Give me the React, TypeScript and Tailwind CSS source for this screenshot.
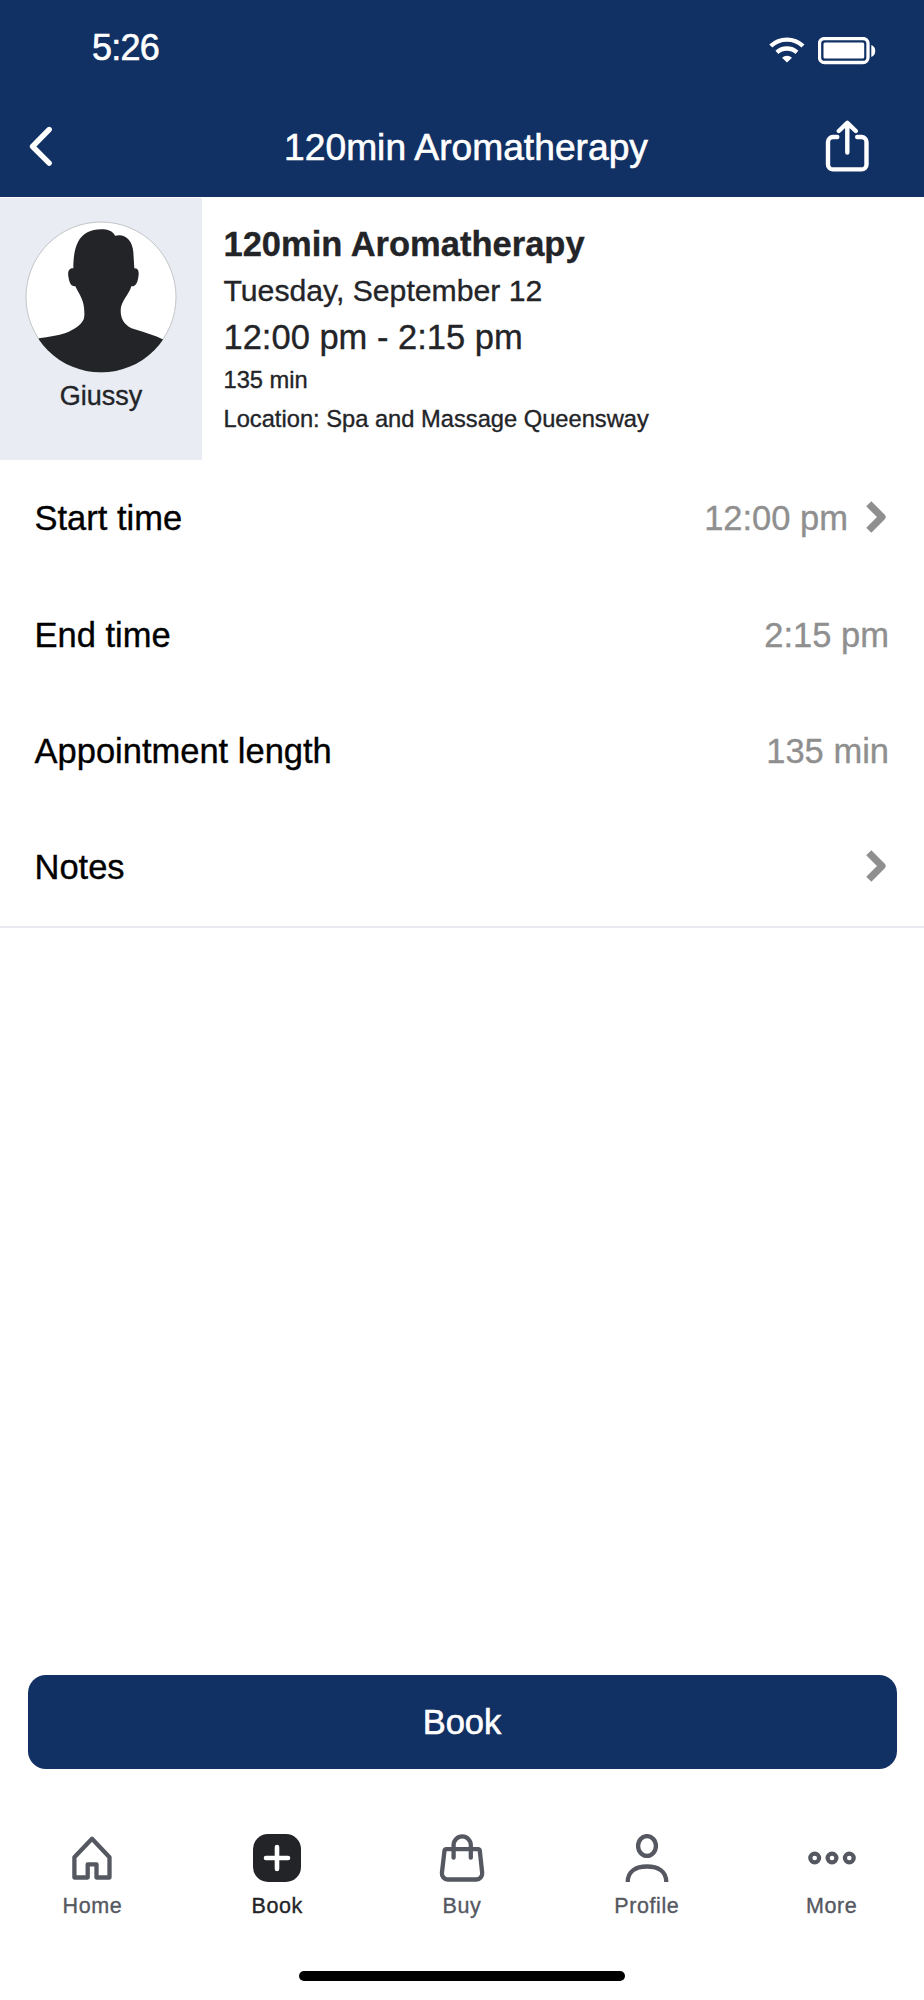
import type { ReactNode } from "react";

function BackIcon() {
  return (
    <svg className="h-12 w-[30px]" viewBox="0 0 30 48" fill="none" stroke="white" strokeWidth="5.4" strokeLinecap="round" strokeLinejoin="round">
      <path d="M21.2 7.5 4.5 24.5 21.2 41.2" />
    </svg>
  );
}

function ShareIcon() {
  return (
    <svg className="h-[52px] w-[44px]" viewBox="0 0 44 52" fill="none" stroke="white" strokeWidth="4.4" strokeLinecap="round" strokeLinejoin="round">
      <path d="M12.3 17H8a5 5 0 0 0-5 5v22.4a5 5 0 0 0 5 5h28.5a5 5 0 0 0 5-5V22a5 5 0 0 0-5-5h-4.3" />
      <path d="M22.3 32.5V3M13.8 11 22.3 2.8l8.5 8.2" />
    </svg>
  );
}

function WifiIcon() {
  return (
    <svg className="h-[27px] w-[36px]" viewBox="0 0 36 27" fill="none" stroke="white" strokeWidth="4.4">
      <path d="M1.8 9A23.5 23.5 0 0 1 34 9" />
      <path d="M7.9 15.4A14.8 14.8 0 0 1 27.9 15.4" />
      <path d="M18 25.5 13 20.7A7.5 7.5 0 0 1 23 20.7Z" fill="white" stroke="none" />
    </svg>
  );
}

function BatteryIcon() {
  return (
    <svg className="h-7 w-[58px]" viewBox="0 0 58 28" fill="white">
      <rect x="1.5" y="1.5" width="48.5" height="24" rx="5" fill="none" stroke="white" strokeWidth="3.3" />
      <rect x="5.5" y="5.5" width="40.7" height="16" rx="1.5" />
      <path d="M53.3 8c5.3 1.5 5.3 10.5 0 12Z" />
    </svg>
  );
}

function Avatar() {
  return (
    <svg className="h-[152px] w-[152px]" viewBox="74 94 456 456">
      <defs>
        <clipPath id="avatar-clip">
          <circle cx="302" cy="322" r="226" />
        </clipPath>
      </defs>
      <circle cx="302" cy="322" r="225" fill="white" stroke="#b9babd" strokeWidth="2.5" />
      <path
        clipPath="url(#avatar-clip)"
        fill="#232428"
        d="M302 119C322 119 338 124 344 138C375 130 397 153 399 188L402 236C414 236 417 245 414 262C411 282 405 291 393 290C386 316 361 334 361 363C361 393 377 410 403 419C433 429 462 436 490 450L530 560H74L116 446C145 441 174 438 196 430C221 420 251 403 252 379C254 333 239 319 225 290C211 291 207 279 204 260C202 244 206 236 219 236C219 206 222 178 233 157C247 130 272 119 302 119Z"
      />
    </svg>
  );
}

function ChevronIcon() {
  return (
    <svg className="-mt-[3px] h-[32px] w-[21px]" viewBox="0 0 21 32" fill="none" stroke="#8f8f8f" strokeWidth="7.2" strokeLinejoin="round">
      <path d="M2.8 2.8 16 16 2.8 29.2" />
    </svg>
  );
}

function HomeIcon() {
  return (
    <svg className="size-12" viewBox="0 0 48 48" fill="none" stroke="#555861" strokeWidth="4.3" strokeLinejoin="round">
      <path d="M24 4.8 41.5 23.3V43.5H28.5V30.3H19.7V43.5H6.4V23.3Z" />
    </svg>
  );
}

function BookIcon() {
  return (
    <svg className="size-12" viewBox="0 0 48 48">
      <rect width="48" height="48" rx="15" fill="#232428" />
      <path d="M24 13v22M13 24h22" stroke="white" strokeWidth="4.6" strokeLinecap="round" />
    </svg>
  );
}

function BagIcon() {
  return (
    <svg className="size-12" viewBox="0 0 48 48" fill="none" stroke="#555861" strokeWidth="4.3" strokeLinejoin="round" strokeLinecap="round">
      <path d="M8.3 15.2H40a1.8 1.8 0 0 1 1.8 1.6L44.2 39a6 6 0 0 1-5.8 6.5H9.7a6 6 0 0 1-5.8-6.5L6.5 16.8A1.8 1.8 0 0 1 8.3 15.2Z" />
      <path d="M15.6 23.7V11a8.6 8.6 0 0 1 17.2 0v12.7" />
    </svg>
  );
}

function ProfileIcon() {
  return (
    <svg className="size-12" viewBox="0 0 48 48" fill="none" stroke="#555861" strokeWidth="4.3">
      <ellipse cx="24" cy="12" rx="8.9" ry="9.9" />
      <path d="M4.7 48C4.7 37 13 32.5 24 32.5S43.3 37 43.3 48" />
    </svg>
  );
}

function MoreIcon() {
  return (
    <svg className="size-12" viewBox="0 0 48 48" fill="none" stroke="#555861" strokeWidth="4.2">
      <circle cx="6.7" cy="24" r="4.4" />
      <circle cx="24" cy="24" r="4.4" />
      <circle cx="41.3" cy="24" r="4.4" />
    </svg>
  );
}

function Row({ label, value, chevron }: { label: string; value?: string; chevron?: boolean }) {
  return (
    <div className="flex flex-1 items-center pr-[35px] pl-[34.5px] text-[34.5px] leading-10">
      <span className="flex-1 text-black">{label}</span>
      <span className="text-[#8f8f8f]">{value}</span>
      {chevron && (
        <span className="mr-[2px] ml-[18px] flex">
          <ChevronIcon />
        </span>
      )}
    </div>
  );
}

function Tab({ label, active, children }: { label: string; active?: boolean; children: ReactNode }) {
  return (
    <button className={`flex flex-1 flex-col items-center ${active ? "text-[#232428]" : "text-[#555861]"}`}>
      {children}
      <span className="mt-[11px] text-[21.5px] leading-[26px] tracking-[0.6px]">{label}</span>
    </button>
  );
}

export default function App() {
  return (
    <div className="flex h-[2000px] w-[924px] flex-col overflow-hidden bg-white font-['Liberation_Sans',Arial,sans-serif] text-[#232428] [-webkit-text-stroke:0.35px]">
      <header className="h-[196.5px] shrink-0 bg-[#113063] text-white [-webkit-text-stroke:0.6px]">
        <div className="flex h-[98px] items-start pt-[27px] pr-[48.5px] pl-[92px]">
          <span className="mt-px flex-1 text-[36px] leading-10 tracking-[-0.8px]">5:26</span>
          <span className="mt-[10px] mr-[13px]">
            <WifiIcon />
          </span>
          <span className="mt-[10px]">
            <BatteryIcon />
          </span>
        </div>
        <div className="flex h-[96px] items-center pr-[55px] pl-[28px]">
          <BackIcon />
          <h1 className="mt-px flex-1 pl-[49px] text-center text-[37.2px] leading-[44px]">120min Aromatherapy</h1>
          <ShareIcon />
        </div>
      </header>

      <section className="flex h-[263.5px] shrink-0">
        <div className="mt-[1.5px] flex w-[202px] flex-col items-center bg-[#e9ecf2] pt-[23px]">
          <Avatar />
          <span className="mt-[7px] text-[27px] leading-8">Giussy</span>
        </div>
        <div className="flex flex-col pt-[24px] pl-[21.5px]">
          <h2 className="text-[34.5px] leading-[46px] font-bold">120min Aromatherapy</h2>
          <p className="text-[30.2px] leading-[48px]">Tuesday, September 12</p>
          <p className="text-[34.5px] leading-[44px]">12:00 pm - 2:15 pm</p>
          <p className="mt-px text-[23.7px] leading-[40px]">135 min</p>
          <p className="text-[23.7px] leading-[38px]">Location: Spa and Massage Queensway</p>
        </div>
      </section>

      <section className="flex h-[467.5px] shrink-0 flex-col border-b-2 border-[#e9e9f1]">
        <Row label="Start time" value="12:00 pm" chevron />
        <Row label="End time" value="2:15 pm" />
        <Row label="Appointment length" value="135 min" />
        <Row label="Notes" chevron />
      </section>

      <div className="flex-1" />

      <div className="px-[27.5px]">
        <button className="flex h-[94.5px] w-full items-center justify-center rounded-[18px] bg-[#113063] pt-[2px] text-[34.5px] text-white [-webkit-text-stroke:0.6px]">Book</button>
      </div>

      <nav className="mt-[65px] flex h-[137px] shrink-0 items-start">
        <Tab label="Home">
          <HomeIcon />
        </Tab>
        <Tab label="Book" active>
          <BookIcon />
        </Tab>
        <Tab label="Buy">
          <BagIcon />
        </Tab>
        <Tab label="Profile">
          <ProfileIcon />
        </Tab>
        <Tab label="More">
          <MoreIcon />
        </Tab>
      </nav>
      <div className="mx-auto mb-[19px] h-[10px] w-[326px] shrink-0 rounded-full bg-black" />
    </div>
  );
}
